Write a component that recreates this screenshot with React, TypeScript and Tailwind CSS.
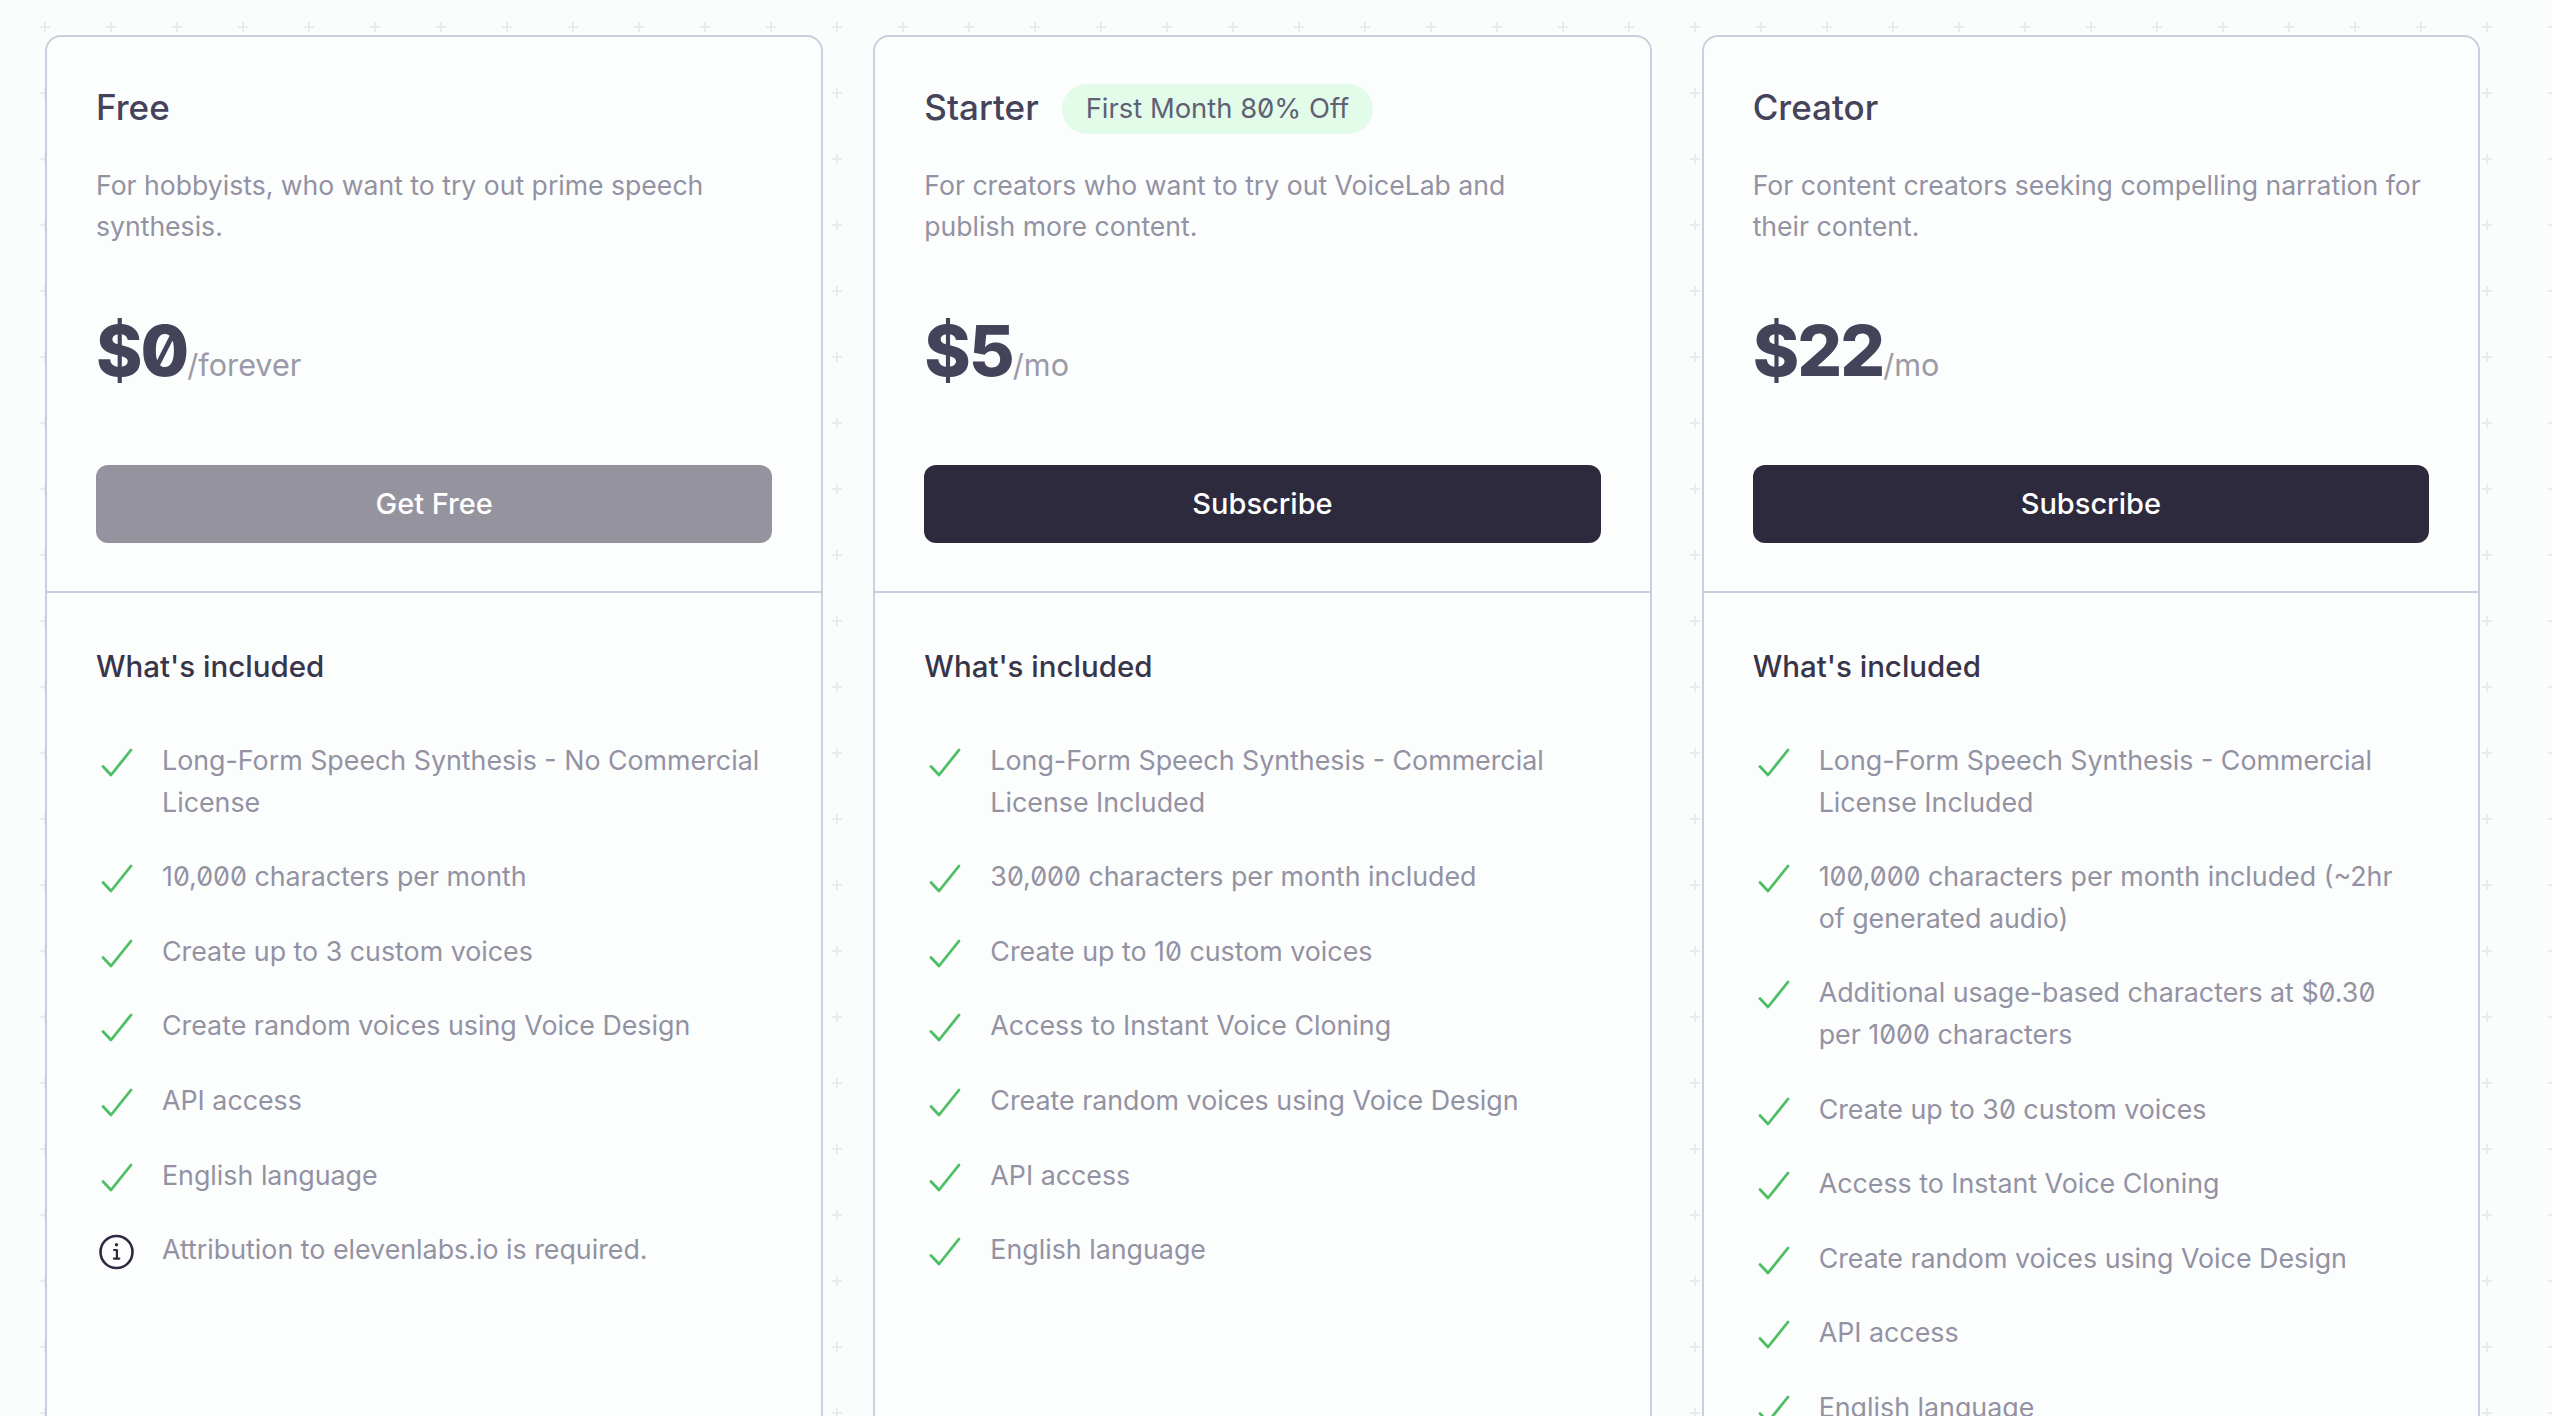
import type { ReactNode } from "react";

type Feature = { text: string; info?: boolean };

interface Plan {
  name: string;
  badge?: string;
  description: string;
  price: string;
  period: string;
  cta: string;
  muted?: boolean;
  features: Feature[];
}

const plans: Plan[] = [
  {
    name: "Free",
    description: "For hobbyists, who want to try out prime speech synthesis.",
    price: "$0",
    period: "/forever",
    cta: "Get Free",
    muted: true,
    features: [
      { text: "Long-Form Speech Synthesis - No Commercial License" },
      { text: "10,000 characters per month" },
      { text: "Create up to 3 custom voices" },
      { text: "Create random voices using Voice Design" },
      { text: "API access" },
      { text: "English language" },
      { text: "Attribution to elevenlabs.io is required.", info: true },
    ],
  },
  {
    name: "Starter",
    badge: "First Month 80% Off",
    description: "For creators who want to try out VoiceLab and publish more content.",
    price: "$5",
    period: "/mo",
    cta: "Subscribe",
    features: [
      { text: "Long-Form Speech Synthesis - Commercial License Included" },
      { text: "30,000 characters per month included" },
      { text: "Create up to 10 custom voices" },
      { text: "Access to Instant Voice Cloning" },
      { text: "Create random voices using Voice Design" },
      { text: "API access" },
      { text: "English language" },
    ],
  },
  {
    name: "Creator",
    description: "For content creators seeking compelling narration for their content.",
    price: "$22",
    period: "/mo",
    cta: "Subscribe",
    features: [
      { text: "Long-Form Speech Synthesis - Commercial License Included" },
      { text: "100,000 characters per month included (~2hr of generated audio)" },
      { text: "Additional usage-based characters at $0.30 per 1000 characters" },
      { text: "Create up to 30 custom voices" },
      { text: "Access to Instant Voice Cloning" },
      { text: "Create random voices using Voice Design" },
      { text: "API access" },
      { text: "English language" },
    ],
  },
];

function CheckIcon() {
  return (
    <svg viewBox="0 0 40 40" className="mt-[3px] -mb-[3px] h-10 w-10 shrink-0" fill="none">
      <path d="M7 23.5 15 32 35 7" stroke="#4cbf64" strokeWidth="2.8" strokeLinecap="round" strokeLinejoin="round" />
    </svg>
  );
}

function InfoIcon() {
  return (
    <svg viewBox="0 0 40 40" className="mt-[3px] -mb-[3px] h-10 w-10 shrink-0" fill="none">
      <circle cx="20.5" cy="20" r="16" stroke="#2d2a3e" strokeWidth="2.6" />
      <circle cx="20.5" cy="12.8" r="1.7" fill="#2d2a3e" />
      <path d="M18.1 18h2.8v8.4M17.9 26.6h5.4" stroke="#2d2a3e" strokeWidth="2.2" strokeLinecap="round" strokeLinejoin="round" />
    </svg>
  );
}

function FeatureRow({ icon, children }: { icon: ReactNode; children: ReactNode }) {
  return (
    <li className="flex items-start gap-[26px]">
      {icon}
      <span className="pr-[8px]">{children}</span>
    </li>
  );
}

function PlanCard({ plan }: { plan: Plan }) {
  return (
    <div className="h-[1500px] rounded-[16px] border-2 border-[#cbcedc] bg-[#fcfdfd]">
      {/* Header */}
      <div className="h-[556px] border-b-2 border-[#cbcedc] px-[49px] pt-[45px]">
        <div className="flex h-[50px] items-center gap-[23px]">
          <h3 className="text-[35px] font-medium text-[#45435a]">{plan.name}</h3>
          {plan.badge && (
            <span className="mt-[4px] flex h-[50px] items-center rounded-full bg-[#e3fbe9] px-[24px] text-[27.4px] text-[#5f6173]">
              {plan.badge}
            </span>
          )}
        </div>
        <p className="mt-[33px] h-[82px] text-[26.6px] leading-[41px] text-[#9392a3]">{plan.description}</p>
        <div className="mt-[65px] flex h-[78px] items-baseline">
          <span className="text-[70.5px] leading-[78px] font-extrabold tracking-[-2px] text-[#45435a]">{plan.price}</span>
          <span className="text-[30.6px] leading-[40px] text-[#9a9aa8]">{plan.period}</span>
        </div>
        <button
          className={
            plan.muted
              ? "mt-[75px] h-[78px] w-full rounded-[12px] bg-[#94939e] text-[29px] font-medium text-white"
              : "mt-[75px] h-[78px] w-full rounded-[12px] bg-[#2d2a3e] text-[29px] font-medium text-white"
          }
        >
          {plan.cta}
        </button>
      </div>

      {/* Feature list */}
      <div className="px-[49px] pt-[53px]">
        <h4 className="text-[29.5px] leading-[40px] font-medium text-[#38354a]">What's included</h4>
        <ul className="mt-[54px] flex flex-col gap-[33px] text-[26.8px] leading-[41.6px] text-[#9392a3]">
          {plan.features.map((f) => (
            <FeatureRow key={f.text} icon={f.info ? <InfoIcon /> : <CheckIcon />}>
              {f.text}
            </FeatureRow>
          ))}
        </ul>
      </div>
    </div>
  );
}

export default function App() {
  return (
    <div className="relative h-screen overflow-hidden bg-[#fbfcfc] font-['Inter',sans-serif] slashed-zero">
      {/* plus pattern behind the cards */}
      <svg className="absolute inset-0 h-full w-full" aria-hidden="true">
        <defs>
          <pattern id="plus" x="40" y="22" width="66" height="66" patternUnits="userSpaceOnUse">
            <path d="M5 0v10M0 5h10" stroke="#e9ebee" strokeWidth="2" />
          </pattern>
        </defs>
        <rect width="100%" height="100%" fill="url(#plus)" />
      </svg>
      <div className="relative grid grid-cols-3 gap-[50px] pt-[35px] pr-[72px] pl-[45px]">
        {plans.map((p) => (
          <PlanCard key={p.name} plan={p} />
        ))}
      </div>
    </div>
  );
}
